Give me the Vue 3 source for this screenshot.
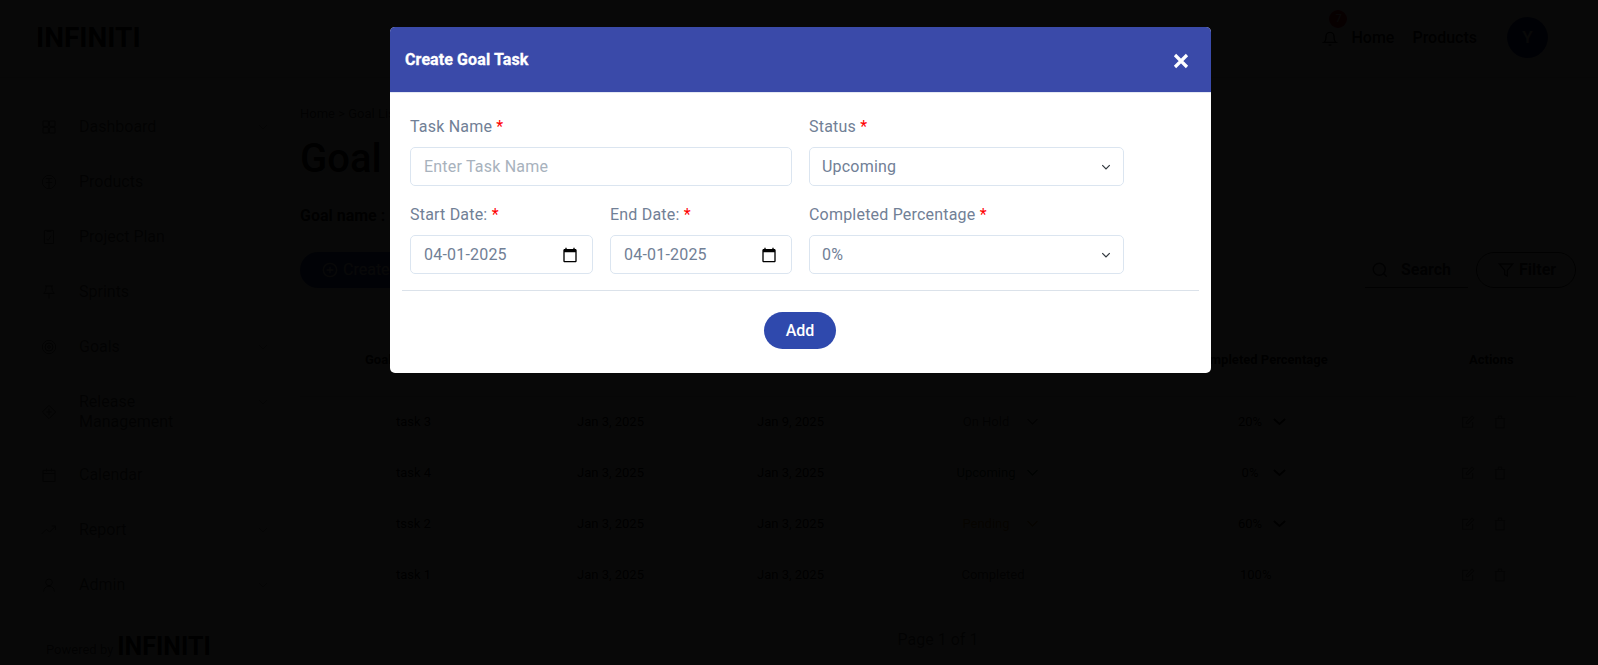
<template>
  <div class="page">
    <header class="topbar">
      <span class="logo">INFINITI</span>
      <div class="topbar-right">
        <span class="bell">
          <svg width="16" height="16" viewBox="0 0 24 24" class="line-icon"><path d="M6 8a6 6 0 0 1 12 0c0 7 3 9 3 9H3s3-2 3-9" /><path d="M10 21h4" /></svg>
          <span class="bell-badge">7</span>
        </span>
        <a class="top-link">Home</a>
        <a class="top-link">Products</a>
        <span class="avatar">Y</span>
      </div>
    </header>

    <div class="layout">
      <aside class="sidebar">
        <nav class="side-nav">
          <div v-for="item in navItems" :key="item.label" class="side-item" :class="{ 'side-item--tall': item.tall }">
            <svg width="16" height="16" viewBox="0 0 24 24" class="line-icon side-icon"><path :d="item.icon" /></svg>
            <span class="side-label">{{ item.label }}</span>
            <svg v-if="item.sub" width="10" height="10" viewBox="0 0 10 10" class="line-icon side-chevron"><path d="M1 3l4 4 4-4" /></svg>
          </div>
        </nav>
        <div class="powered">
          <span>Powered by</span>
          <span class="logo logo--small">INFINITI</span>
        </div>
      </aside>

      <main class="content">
        <div class="crumbs">Home &gt; Goal List</div>
        <h1 class="title">Goal Tasks</h1>
        <div class="goal-name">Goal name :</div>

        <div class="toolbar">
          <button class="create-btn" type="button">
            <svg width="16" height="16" viewBox="0 0 24 24" class="line-icon"><circle cx="12" cy="12" r="10" /><path d="M12 7v10M7 12h10" /></svg>
            Create Task
          </button>
          <div class="toolbar-right">
            <div class="search">
              <svg width="18" height="18" viewBox="0 0 24 24" class="line-icon"><circle cx="11" cy="11" r="8" /><path d="M21 21l-4.3-4.3" /></svg>
              <span>Search</span>
            </div>
            <button class="filter-btn" type="button">
              <svg width="16" height="16" viewBox="0 0 24 24" class="line-icon"><path d="M22 3H2l8 9.5V19l4 2v-8.500z" /></svg>
              Filter
            </button>
          </div>
        </div>

        <div class="table-head">
          <span>Goal Task</span>
          <span>Start Date</span>
          <span>End Date</span>
          <span>Status</span>
          <span>Completed Percentage</span>
          <span>Actions</span>
        </div>
        <div v-for="row in rows" :key="row.name" class="table-row">
          <span>{{ row.name }}</span>
          <span>{{ row.start }}</span>
          <span>{{ row.end }}</span>
          <span class="cell-select" :style="{ color: row.color }">
            <span class="status-text" :class="{ 'status-text--wide': !row.open }">{{ row.status }}</span>
            <svg v-if="row.open" width="15" height="15" viewBox="0 0 24 24" class="line-icon"><path d="M4 8l8 8 8-8" /></svg>
          </span>
          <span class="cell-select">
            <span class="pct-text" :class="{ 'pct-text--plain': !row.open }">{{ row.pct }}</span>
            <svg v-if="row.open" width="15" height="15" viewBox="0 0 24 24" class="line-icon pct-chevron"><path d="M3 8l9 8 9-8" /></svg>
          </span>
          <span class="cell-actions">
            <svg width="14" height="14" viewBox="0 0 24 24" class="line-icon"><path d="M12 4H3v17h17v-9" /><path d="M19 2l3 3-10 10H9v-3z" /></svg>
            <svg width="12" height="14" viewBox="0 0 20 24" class="line-icon"><path d="M3 6h14v16H3zM1 6h18M7 6V2h6v4" /></svg>
          </span>
        </div>
        <div class="pager">Page 1 of 1</div>
      </main>
    </div>

    <div class="backdrop">
      <section class="modal">
        <header class="modal-head">
          <h2 class="modal-title">Create Goal Task</h2>
          <svg class="modal-close" width="16" height="16" viewBox="0 0 16 16"><path d="M2 2l12 12M14 2L2 14" /></svg>
        </header>

        <form class="modal-form" @submit.prevent>
          <div class="field field--wide">
            <label class="field-label">Task Name <em>*</em></label>
            <input class="field-box" type="text" placeholder="Enter Task Name" />
          </div>
          <div class="field">
            <label class="field-label">Status <em>*</em></label>
            <div class="stack">
              <select v-model="status" class="field-box field-box--select">
                <option>Upcoming</option>
                <option>Pending</option>
                <option>On Hold</option>
                <option>Completed</option>
              </select>
              <svg class="stack-icon stack-icon--chevron" width="10" height="10" viewBox="0 0 16 16"><path d="M2 5l6 6 6-6" /></svg>
            </div>
          </div>
          <div class="field">
            <label class="field-label">Start Date: <em>*</em></label>
            <div class="stack">
              <input v-model="startDate" class="field-box" type="text" />
              <svg class="stack-icon" width="16" height="16" viewBox="0 0 24 24"><path :d="calendarPath" /></svg>
            </div>
          </div>
          <div class="field">
            <label class="field-label">End Date: <em>*</em></label>
            <div class="stack">
              <input v-model="endDate" class="field-box" type="text" />
              <svg class="stack-icon" width="16" height="16" viewBox="0 0 24 24"><path :d="calendarPath" /></svg>
            </div>
          </div>
          <div class="field">
            <label class="field-label">Completed Percentage <em>*</em></label>
            <div class="stack">
              <select v-model="percentage" class="field-box field-box--select">
                <option>0%</option>
                <option>20%</option>
                <option>60%</option>
                <option>100%</option>
              </select>
              <svg class="stack-icon stack-icon--chevron" width="10" height="10" viewBox="0 0 16 16"><path d="M2 5l6 6 6-6" /></svg>
            </div>
          </div>
        </form>

        <hr class="modal-rule" />
        <div class="modal-foot">
          <button class="add-btn" type="button">Add</button>
        </div>
      </section>
    </div>
  </div>
</template>

<script setup>
import { ref } from "vue";

const status = ref("Upcoming");
const percentage = ref("0%");
const startDate = ref("04-01-2025");
const endDate = ref("04-01-2025");

const calendarPath =
  "M20 3h-1V1h-2v2H7V1H5v2H4c-1.1 0-2 .9-2 2v16c0 1.100.9 2 2 2h16c1.100 0 2-.9 2-2V5c0-1.100-.9-2-2-2zm0 18H4V8h16v13z";

const navItems = [
  { label: "Dashboard", sub: true, icon: "M3 3h8v8H3zM13 3h8v8h-8zM3 13h8v8H3zM13 13h8v8h-8z" },
  { label: "Products", icon: "M12 2a10 10 0 1 0 0 20 10 10 0 0 0 0-20zM7 7h10M12 7v15M7 13h10" },
  { label: "Project Plan", icon: "M5 2h14v20H5zM9 2v2h6V2M8 15l3 2 4-7" },
  { label: "Sprints", icon: "M6 3h12M8 3l-1 7-3 4h16l-3-4-1-7M12 14v8" },
  { label: "Goals", sub: true, icon: "M12 2a10 10 0 1 0 0 20 10 10 0 0 0 0-20zM12 6a6 6 0 1 0 0 12 6 6 0 0 0 0-12zM12 10a2 2 0 1 0 0 4 2 2 0 0 0 0-4z" },
  { label: "Release Management", sub: true, tall: true, icon: "M12 2l10 10-10 10L2 12zM12 7v10M8 12h8" },
  { label: "Calendar", icon: "M3 5h18v17H3zM3 10h18M8 2v5M16 2v5" },
  { label: "Report", sub: true, icon: "M1 18l7-7 5 4 9-9M16 6h6v6" },
  { label: "Admin", sub: true, icon: "M12 3a5 5 0 1 0 0 10 5 5 0 0 0 0-10zM4 22c0-5 3-8 8-8s8 3 8 8" },
];

const rows = [
  { name: "task 3", start: "Jan 3, 2025", end: "Jan 9, 2025", status: "On Hold", pct: "20%", open: true, color: "#555" },
  { name: "task 4", start: "Jan 3, 2025", end: "Jan 3, 2025", status: "Upcoming", pct: "0%", open: true, color: "#0a4a2a" },
  { name: "tssk 2", start: "Jan 3, 2025", end: "Jan 3, 2025", status: "Pending", pct: "60%", open: true, color: "#b07a10" },
  { name: "task 1", start: "Jan 3, 2025", end: "Jan 3, 2025", status: "Completed", pct: "100%", open: false, color: "#444" },
];
</script>

<style scoped>
.page {
  position: relative;
  height: 100vh;
  overflow: hidden;
  background: #fff;
  color: #000;
  font-family: Roboto, "Liberation Sans", sans-serif;
  font-size: 16px;
  line-height: 20px;
}

.line-icon {
  fill: none;
  stroke: currentColor;
  stroke-width: 2;
  flex-shrink: 0;
}

/* top bar */
.topbar {
  display: flex;
  align-items: center;
  justify-content: space-between;
  box-sizing: border-box;
  height: 78px;
  padding: 0 50px 2px 36px;
  border-bottom: 1px solid #ddd;
}

.logo {
  font-size: 28px;
  line-height: 32px;
  font-weight: 700;
}

.logo--small {
  font-size: 25px;
}

.topbar-right {
  display: flex;
  align-items: center;
}

.bell {
  position: relative;
  display: flex;
  margin: 0 5px 0 0;
  padding-top: 3px;
}

.bell-badge {
  position: absolute;
  top: -18px;
  left: 7px;
  width: 18px;
  height: 18px;
  border-radius: 50%;
  background: #d5001c;
  color: #fff;
  font-size: 11px;
  line-height: 18px;
  text-align: center;
}

.top-link {
  margin-left: 8px;
  margin-right: 9px;
  font-weight: 500;
  padding-top: 1px;
}

.top-link + .top-link {
  margin-left: 9px;
  margin-right: 10px;
}

.avatar {
  width: 41px;
  height: 41px;
  margin-left: 20px;
  border-radius: 50%;
  background: #1a2f8f;
  color: #fff;
  font-size: 17px;
  font-weight: 500;
  line-height: 41px;
  text-align: center;
}

/* sidebar */
.layout {
  display: flex;
}

.sidebar {
  flex: 0 0 270px;
  padding-top: 21px;
}

.side-nav {
  color: #555;
}

.side-item {
  display: flex;
  align-items: center;
  padding: 17.5px 2px 17.5px 41px;
}

.side-item--tall {
  padding-bottom: 16px;
}

.side-label {
  flex: 0 0 130px;
  margin-left: 22px;
}

.side-icon {
  stroke-width: 1.5;
}

.side-chevron {
  align-self: flex-start;
  margin: 5px 0 0 auto;
  color: #999;
  stroke-width: 1;
}

.powered {
  display: flex;
  align-items: center;
  gap: 4px;
  margin: 24px 0 0 46px;
  color: #555;
  font-size: 13px;
}

.powered .logo {
  margin-top: -6px;
  color: #000;
}

/* content */
.content {
  flex: 1;
  padding: 26px 22px 0 30px;
}

.crumbs {
  color: #444;
  font-size: 13px;
}

.title {
  margin: 11px 0 0;
  font-size: 40px;
  line-height: 48px;
  font-weight: 500;
}

.goal-name {
  margin-top: 23px;
  font-weight: 700;
}

.toolbar {
  display: flex;
  align-items: center;
  justify-content: space-between;
  margin-top: 26px;
}

.create-btn {
  display: flex;
  align-items: center;
  gap: 5px;
  height: 36px;
  padding: 0 22px;
  border: 0;
  border-radius: 18px;
  background: #2f49ad;
  color: #fff;
  font: inherit;
}

.toolbar-right {
  display: flex;
  align-items: center;
  gap: 8px;
}

.search {
  display: flex;
  align-items: center;
  gap: 12px;
  box-sizing: border-box;
  width: 103px;
  height: 35px;
  padding-left: 6px;
  border-bottom: 1px solid #333;
  color: #223;
  font-weight: 700;
}

.filter-btn {
  display: flex;
  align-items: center;
  gap: 5px;
  height: 36px;
  width: 100px;
  box-sizing: border-box;
  padding: 0 0 0 21px;
  border: 1px solid #222;
  border-radius: 18px;
  background: #fff;
  color: #223;
  font: inherit;
  font-weight: 700;
}

/* table */
.table-head {
  display: grid;
  grid-template-columns: 212px 180px 190px 247px 275px auto;
  box-sizing: border-box;
  height: 47px;
  margin-top: 62px;
  padding-left: 65px;
  border-bottom: 1px solid #ddd;
  font-size: 13px;
  font-weight: 700;
}

.table-head + .table-row {
  margin-top: -1px;
}

.table-row {
  display: grid;
  grid-template-columns: 181px 180px 193px 284px 227px auto;
  align-items: center;
  height: 51px;
  padding-left: 96px;
  font-size: 13px;
}

.cell-select {
  display: flex;
  align-items: center;
}

.status-text {
  width: 72px;
  margin-right: 3px;
  text-align: center;
}

.status-text--wide {
  width: 86px;
}

.pct-text {
  width: 32px;
  margin-right: 6px;
  text-align: center;
}

.pct-text--plain {
  padding-left: 6px;
  text-align: left;
}

.pct-chevron {
  stroke-width: 3;
}

.cell-actions {
  display: flex;
  align-items: center;
  gap: 19px;
  color: #777;
}

.pager {
  margin-top: 30px;
  color: #555;
  text-align: center;
}

/* modal */
.backdrop {
  position: fixed;
  inset: 0;
  background: rgba(0, 0, 0, 0.97);
}

.modal {
  width: 821px;
  margin: 27px 0 0 390px;
  border-radius: 5px;
  overflow: hidden;
  background: #fff;
  color: #718096;
}

.modal-head {
  display: flex;
  align-items: center;
  justify-content: space-between;
  box-sizing: border-box;
  height: 66px;
  padding: 0 22px 0 15px;
  border-bottom: 1px solid #e4e8f3;
  background: #3a4aa9;
}

.modal-title {
  margin: 0;
  color: #fff;
  font-size: 16px;
  font-weight: 700;
  letter-spacing: 0.1px;
  -webkit-text-stroke: 0.3px #fff;
}

.modal-close {
  fill: none;
  stroke: #fff;
  stroke-width: 3.2;
  margin-top: 2px;
}

.modal-form {
  display: grid;
  grid-template-columns: 183px 182px 315px;
  column-gap: 17px;
  row-gap: 19px;
  padding: 24px 0 0 20px;
  letter-spacing: 0.2px;
}

.field {
  display: flex;
  flex-direction: column;
  gap: 10px;
  min-width: 0;
}

.field--wide {
  grid-column: span 2;
}

.field-label {
  line-height: 20px;
}

.field-label em {
  color: #f00;
  font-style: normal;
}

.field-box {
  box-sizing: border-box;
  width: 100%;
  height: 39px;
  padding: 0 13px;
  border: 1px solid #dbe5f0;
  border-radius: 5px;
  outline: 0;
  background: transparent;
  color: #718096;
  font: inherit;
  letter-spacing: inherit;
  appearance: none;
}

.field-box--select {
  padding-left: 12px;
}

.field-box::placeholder {
  color: #a8b2bd;
  opacity: 1;
}

/* chevron / calendar share the control's grid cell */
.stack {
  display: grid;
  align-items: center;
}

.stack > * {
  grid-area: 1 / 1;
}

.stack-icon {
  justify-self: end;
  margin-right: 15px;
  fill: #000;
  pointer-events: none;
}

.stack-icon--chevron {
  margin-right: 13px;
  fill: none;
  stroke: #343a40;
  stroke-width: 2;
}

.modal-rule {
  height: 1px;
  margin: 16px 12px 0;
  border: 0;
  background: #dbe2ea;
}

.modal-foot {
  display: flex;
  justify-content: center;
  padding: 21px 1px 24px 0;
}

.add-btn {
  width: 72px;
  height: 37px;
  border: 0;
  border-radius: 19px;
  background: #2f49ad;
  color: #fff;
  font: inherit;
  font-weight: 500;
}
</style>
